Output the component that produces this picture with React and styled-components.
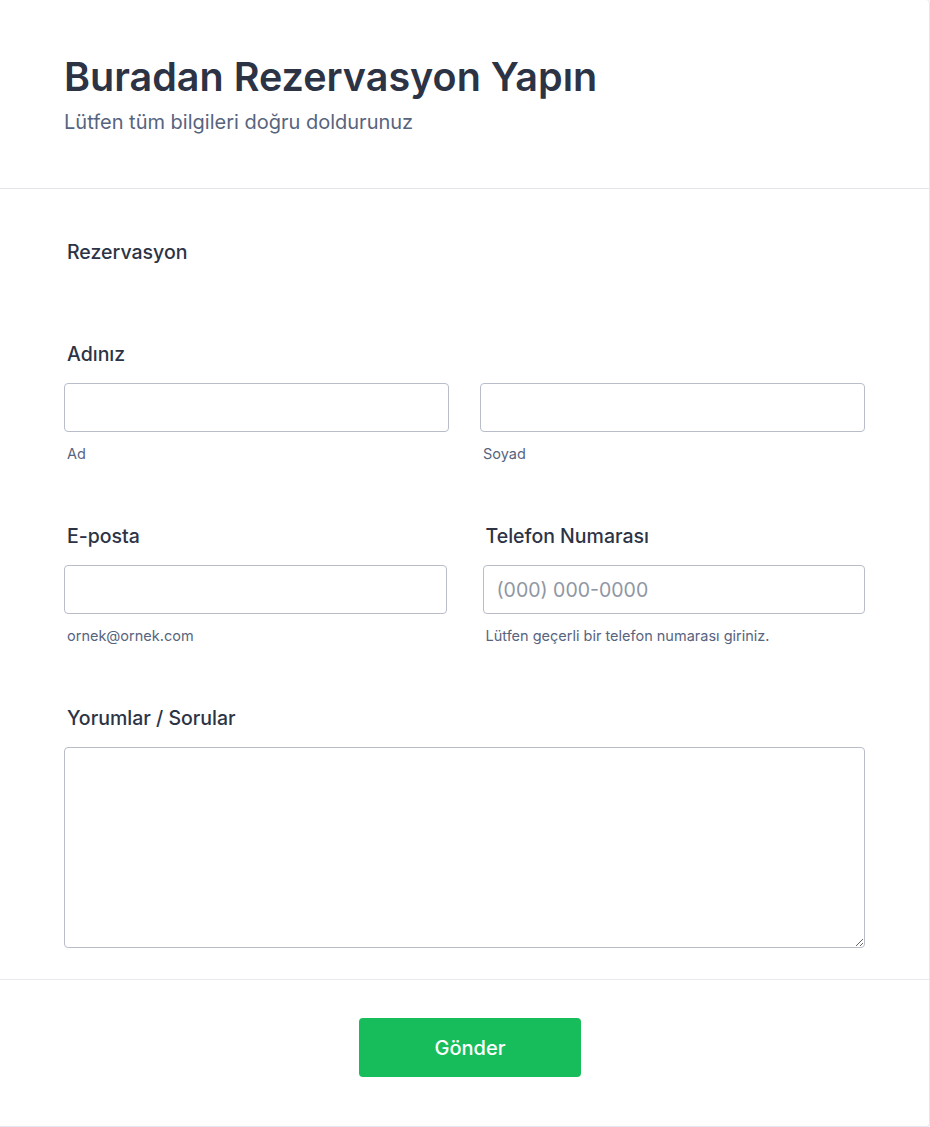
import React from "react";
import styled, { createGlobalStyle } from "styled-components";

const GlobalStyle = createGlobalStyle`
  * { box-sizing: border-box; }
  body {
    margin: 0;
    background: #f3f3fe;
    font-family: Inter, "Noto Sans", sans-serif;
    color: #2c3345;
  }
`;

const Card = styled.div`
  width: 930px;
  height: 1127px;
  background: #fff;
  border-right: 1px solid #e6e6f0;
  border-bottom: 1px solid #e6e6f0;
  border-radius: 0 4px 4px 0;
  display: flex;
  flex-direction: column;
`;

const Header = styled.header`
  padding: 53px 64px 0;
  height: 189px;
  border-bottom: 1px solid #e3e3ec;
`;

const Title = styled.h1`
  margin: 0;
  font-size: 39.5px;
  line-height: 48px;
  font-weight: 600;
  color: #2c3345;
`;

const Subtitle = styled.p`
  margin: 9px 0 0;
  font-size: 20px;
  line-height: 24px;
  color: #57647e;
`;

const Body = styled.main`
  padding: 51px 64px 0;
  height: 791px;
  border-bottom: 1px solid #e9e9f0;
`;

const Section = styled.h2`
  margin: 0 0 0 3px;
  font-size: 19.5px;
  line-height: 24px;
  font-weight: 500;
  color: #2c3345;
`;

const Field = styled.div`
  margin-top: ${(p) => p.$top}px;
`;

const Row = styled.div`
  display: grid;
  grid-template-columns: 1fr 1fr;
  column-gap: ${(p) => p.$gap || 31}px;
`;

const Label = styled.label`
  display: block;
  margin: 0 0 17px 3px;
  font-size: 19.5px;
  line-height: 24px;
  font-weight: 500;
  color: #2c3345;
`;

const Input = styled.input`
  display: block;
  width: 100%;
  height: 49px;
  border: 1px solid #b8bdc9;
  border-radius: 4px;
  padding: 0 13px;
  font-family: inherit;
  font-size: 19.5px;
  color: #2c3345;
  background: #fff;
  outline: none;

  &::placeholder {
    color: #8f96a3;
  }
`;

const Hint = styled.span`
  display: block;
  margin: 13px 0 0 3px;
  font-size: 14.5px;
  line-height: 18px;
  color: #57647e;
`;

const TextArea = styled.textarea`
  display: block;
  width: 100%;
  height: 201px;
  border: 1px solid #b8bdc9;
  border-radius: 4px;
  padding: 10px 13px;
  font-family: inherit;
  font-size: 16px;
  resize: vertical;
  outline: none;
`;

const Footer = styled.footer`
  flex: 1;
  display: flex;
  justify-content: center;
  padding: 38px 0 0 11px;
`;

const Submit = styled.button`
  width: 222px;
  height: 59px;
  border: none;
  border-radius: 4px;
  background: #18bd5b;
  color: #fff;
  font-family: inherit;
  font-size: 20px;
  font-weight: 500;
  cursor: pointer;
`;

export default function App() {
  return (
    <>
      <GlobalStyle />
      <Card>
        <Header>
          <Title>Buradan Rezervasyon Yapın</Title>
          <Subtitle>Lütfen tüm bilgileri doğru doldurunuz</Subtitle>
        </Header>
        <Body>
          <Section>Rezervasyon</Section>

          <Field $top={78}>
            <Label>Adınız</Label>
            <Row $gap={31}>
              <div>
                <Input />
                <Hint>Ad</Hint>
              </div>
              <div>
                <Input />
                <Hint>Soyad</Hint>
              </div>
            </Row>
          </Field>

          <Row $gap={36}>
            <Field $top={61}>
              <Label>E-posta</Label>
              <Input />
              <Hint>ornek@ornek.com</Hint>
            </Field>
            <Field $top={61}>
              <Label>Telefon Numarası</Label>
              <Input placeholder="(000) 000-0000" />
              <Hint>Lütfen geçerli bir telefon numarası giriniz.</Hint>
            </Field>
          </Row>

          <Field $top={61}>
            <Label>Yorumlar / Sorular</Label>
            <TextArea />
          </Field>
        </Body>
        <Footer>
          <Submit>Gönder</Submit>
        </Footer>
      </Card>
    </>
  );
}
